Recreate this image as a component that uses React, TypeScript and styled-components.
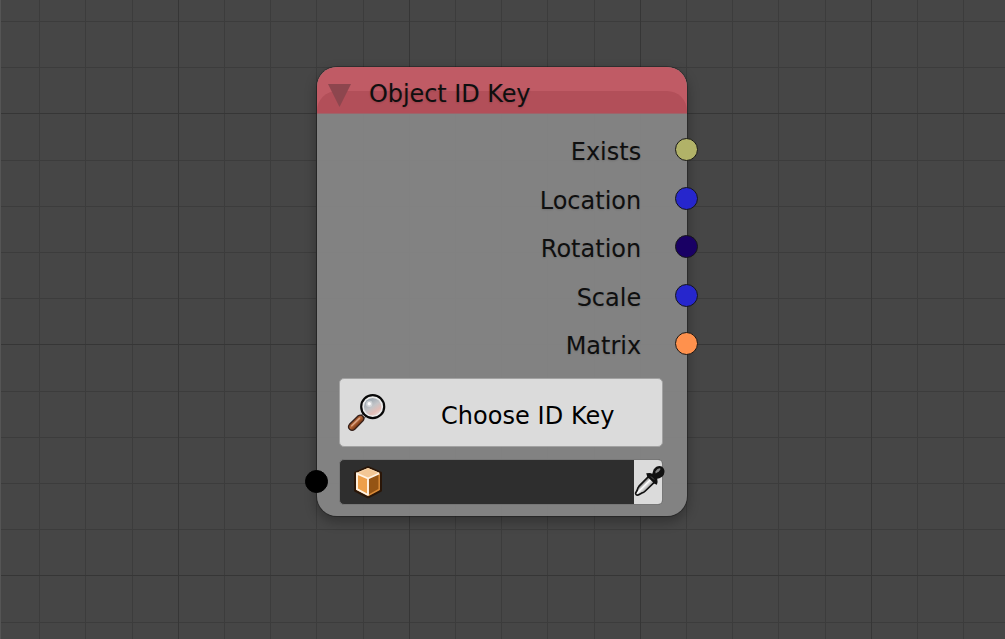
import React from 'react';
import styled, { createGlobalStyle } from 'styled-components';

const GlobalStyle = createGlobalStyle`
  html, body { margin: 0; padding: 0; background: #464646; overflow: hidden; }
  * { box-sizing: border-box; }
`;

const Editor = styled.main`
  position: relative;
  width: 1005px;
  height: 639px;
  overflow: hidden;
  background: #464646;
  box-shadow: inset 1px 0 0 #555;
  font-family: 'DejaVu Sans', sans-serif;
  font-size: 24px;
  color: #0f0f0f;
`;

const GridLines = styled.svg`
  position: absolute;
  top: 0;
  left: 0;
`;

const Node = styled.section`
  position: absolute;
  left: 316.5px;
  top: 67px;
  width: 370px;
  height: 449px;
  border-radius: 20px;
  background: rgba(134, 134, 134, 0.94);
  box-shadow: 0 0 0 1px rgba(20, 20, 20, 0.4), 0 5px 12px 1px rgba(0, 0, 0, 0.28);
  display: flex;
  flex-direction: column;
`;

const Header = styled.header`
  height: 47px;
  flex: none;
  position: relative;
  overflow: hidden;
  border-radius: 20px 20px 0 0;
  background: #c05b65;
  border-bottom: 1px solid #9d646a;
  display: flex;
  align-items: center;
  padding-left: 11.5px;
  &::before {
    content: '';
    position: absolute;
    inset: 24px 0 0 0;
    border-radius: 20px 20px 0 0;
    background: #b24f59;
  }
`;

const Collapse = styled.svg`
  position: relative;
  flex: none;
  margin-top: 10px;
`;

const Title = styled.h1`
  position: relative;
  margin: 8px 0 0 18px;
  font-size: 24px;
  font-weight: 400;
  line-height: 28px;
  letter-spacing: -0.08px;
  white-space: nowrap;
  text-shadow: 0 1px 2px rgba(0, 0, 0, 0.14);
`;

const Outputs = styled.ul`
  list-style: none;
  margin: 0;
  padding: 14px 0 0;
  height: 264px;
`;

const Output = styled.li`
  height: 48.5px;
  display: flex;
  justify-content: flex-end;
  align-items: flex-start;
  margin-right: -11.5px;
`;

const Label = styled.span`
  line-height: 28px;
  margin: 10.4px 33.8px 0 0;
  text-shadow: 0 1px 2px rgba(0, 0, 0, 0.12);
`;

const Socket = styled.span<{ $color: string; $raise?: number }>`
  width: 23px;
  height: 23px;
  margin-top: ${(p) => 10 - (p.$raise ?? 0)}px;
  flex: none;
  border-radius: 50%;
  border: 1px solid ${(p) => (p.$color === '#000' ? '#000' : '#171717')};
  background: ${(p) => p.$color};
`;

const ChooseButton = styled.button`
  width: 324px;
  height: 69px;
  flex: none;
  margin: 0 0 12px 22.5px;
  padding: 0 0 0 8px;
  border: 1px solid #a2a2a2;
  border-radius: 5px;
  background: #dbdbdb;
  display: flex;
  align-items: center;
  font: inherit;
  color: #000;
`;

const ChooseText = styled.span`
  margin: 6px 0 0 55px;
  letter-spacing: 0.05px;
  white-space: nowrap;
`;

const FieldRow = styled.div`
  display: flex;
  align-items: center;
  margin-left: -11.5px;
`;

const Field = styled.div`
  width: 324px;
  height: 46px;
  margin-left: 11px;
  border: 1px solid #777;
  border-radius: 5px;
  background: #2e2e2e;
  display: flex;
  justify-content: space-between;
  align-items: center;
  padding-left: 12px;
`;

const Picker = styled.div`
  width: 28px;
  height: 44px;
  border-radius: 0 4px 4px 0;
  background: #dbdbdb;
  display: flex;
  align-items: center;
  padding-bottom: 2px;
`;

const Icon = styled.svg`
  flex: none;
  display: block;
  overflow: visible;
`;

const STEP = 46.2;
const columns = Array.from({ length: 21 }, (_, i) => ({ at: Math.floor(39.7 + i * STEP), major: i % 5 === 3 }));
const rows = Array.from({ length: 14 }, (_, i) => ({ at: Math.floor(21.5 + i * STEP), major: i % 5 === 2 }));
const lineColor = (major: boolean) => (major ? '#363636' : '#3c3c3c');

const Grid = () => (
  <GridLines width="1005" height="639">
    {columns.filter((c) => !c.major).map((c) => (
      <rect key={c.at} x={c.at} y="0" width="1" height="639" fill={lineColor(false)} />
    ))}
    {rows.filter((r) => !r.major).map((r) => (
      <rect key={r.at} x="1" y={r.at} width="1004" height="1" fill={lineColor(false)} />
    ))}
    {columns.filter((c) => c.major).map((c) => (
      <rect key={c.at} x={c.at} y="0" width="1" height="639" fill={lineColor(true)} />
    ))}
    {rows.filter((r) => r.major).map((r) => (
      <rect key={r.at} x="1" y={r.at} width="1004" height="1" fill={lineColor(true)} />
    ))}
  </GridLines>
);

const MagnifierIcon = () => (
  <Icon width="38" height="38" viewBox="0 0 38 38">
    <defs>
      <linearGradient id="lens" x1="0.2" y1="0.1" x2="0.8" y2="1">
        <stop offset="0" stopColor="#98a4ae" />
        <stop offset="0.45" stopColor="#c4c5c8" />
        <stop offset="0.75" stopColor="#e3bdb6" />
        <stop offset="1" stopColor="#e9dedb" />
      </linearGradient>
      <linearGradient id="handle" x1="0.2" y1="0.2" x2="0.8" y2="0.8">
        <stop offset="0.2" stopColor="#8a451f" />
        <stop offset="0.45" stopColor="#b5683a" />
        <stop offset="0.8" stopColor="#6b2b0b" />
      </linearGradient>
    </defs>
    <path d="M13 24.5l4-4" stroke="#666" strokeWidth="5" />
    <path d="M13 24.5l4-4" stroke="#ddd" strokeWidth="2.5" />
    <path d="M1.5 30.3L10.2 21.8Q12.5 20.1 14.8 22.3Q16.8 24.5 15.2 26.7L6.8 35.3Q4 37.5 1.7 35.3Q-0.6 33 1.5 30.3Z" fill="url(#handle)" stroke="#35201a" strokeWidth="1.3" />
    <path d="M3.8 31.8l7.6-7.4" stroke="#d9a080" strokeWidth="1.6" strokeLinecap="round" />
    <circle cx="24.7" cy="12.7" r="11.5" fill="#ececec" stroke="#080808" strokeWidth="2.2" />
    <circle cx="24.7" cy="12.7" r="8.8" fill="url(#lens)" />
    <circle cx="21.2" cy="9.7" r="3.2" fill="#fff" opacity="0.4" />
    <circle cx="21.2" cy="9.7" r="1.7" fill="#fff" />
  </Icon>
);

const CubeIcon = () => (
  <Icon width="32" height="34" viewBox="0 0 32 34">
    <path d="M16 2.5L28.5 8V25.5L16 31.8L3.5 25.5V8Z" fill="#2a1608" stroke="#2a1608" strokeWidth="3" strokeLinejoin="round" />
    <path d="M16 3L27.8 8L16 13.5L4.2 8Z" fill="#f3c795" />
    <path d="M4.2 8L16 13.5V31L4.2 24.8Z" fill="#ed9f4a" />
    <path d="M27.8 8L16 13.5V31L27.8 24.8Z" fill="#955414" />
    <path d="M16 30.6L27.2 24.5V9" fill="none" stroke="#d98b39" strokeWidth="1.5" />
    <path d="M16 3.5L27.3 8.2M16 3.5L4.7 8.2" stroke="#f6d2a8" strokeWidth="1" />
    <path d="M16 30.5V13.5L27.2 8.5M16 13.5L5 8.6V24.2L16 30" fill="none" stroke="#fff3e4" strokeWidth="1.9" />
  </Icon>
);

const EyedropperIcon = () => (
  <Icon width="32" height="32" viewBox="0 0 32 32">
    <defs>
      <linearGradient id="tube" x1="0.25" y1="0.25" x2="0.7" y2="0.7">
        <stop offset="0.3" stopColor="#858585" />
        <stop offset="0.5" stopColor="#fff" />
        <stop offset="0.75" stopColor="#bbb" />
      </linearGradient>
    </defs>
    <path d="M15 11L5 21.2Q3.6 22.8 3.3 25L1.6 28.2Q1.8 30.6 4.2 30L7.5 28.2Q9.8 27.7 11.3 26L21 16.7Z" fill="url(#tube)" stroke="#111" strokeWidth="1.7" strokeLinejoin="round" />
    <path d="M12.2 8.3L16 8L18.3 8.8L19.6 4.5Q23 0 27.8 1.4Q32 4.8 29.8 9.8Q28 13 23.2 13.8L23.6 17L22.9 19.8L20.5 18.8L13.3 11.7Z" fill="#101010" />
    <path d="M21.3 6.8Q23.5 3 26.3 3.4Q27 4.6 24.8 6.4L21.7 8.6Z" fill="#858585" />
    <path d="M17 11.5l3 3" stroke="#555" strokeWidth="1" />
  </Icon>
);

const outputs = [
  { name: 'Exists', color: '#b1b268' },
  { name: 'Location', color: '#2626cd' },
  { name: 'Rotation', color: '#190064' },
  { name: 'Scale', color: '#2626cd' },
  { name: 'Matrix', color: '#ff914d' },
];

export default function App() {
  return (
    <>
      <GlobalStyle />
      <Editor>
        <Grid />
        <Node>
          <Header>
            <Collapse width="23" height="23" viewBox="0 0 23 23">
              <path d="M0 0H23L11.5 23Z" fill="#8d464e" />
            </Collapse>
            <Title>Object ID Key</Title>
          </Header>
          <Outputs>
            {outputs.map((o) => (
              <Output key={o.name}>
                <Label>{o.name}</Label>
                <Socket $color={o.color} />
              </Output>
            ))}
          </Outputs>
          <ChooseButton>
            <MagnifierIcon />
            <ChooseText>Choose ID Key</ChooseText>
          </ChooseButton>
          <FieldRow>
            <Socket $color="#000" $raise={11} />
            <Field>
              <CubeIcon />
              <Picker>
                <EyedropperIcon />
              </Picker>
            </Field>
          </FieldRow>
        </Node>
      </Editor>
    </>
  );
}
